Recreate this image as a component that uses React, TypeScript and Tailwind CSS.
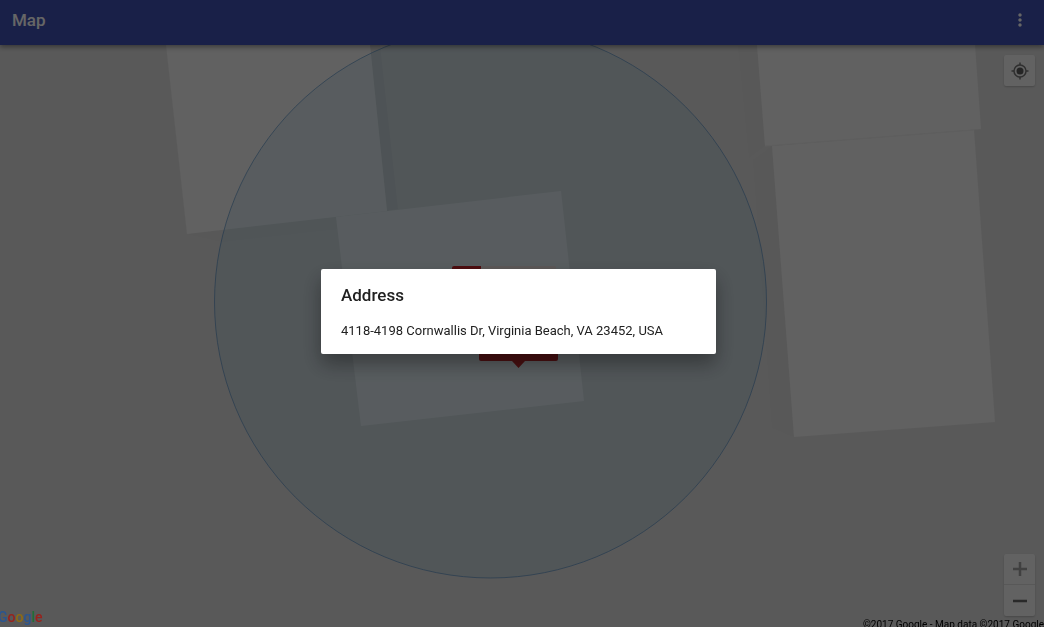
import { MdMoreVert } from "react-icons/md";

const logoLetters = [
  { letter: "G", color: "text-[#2a5590]" },
  { letter: "o", color: "text-[#98221c]" },
  { letter: "o", color: "text-[#8f6c12]" },
  { letter: "g", color: "text-[#2a5590]" },
  { letter: "l", color: "text-[#1f6e36]" },
  { letter: "e", color: "text-[#98221c]" },
];

function MapDrawing() {
  return (
    <svg
      className="absolute inset-0 size-full"
      viewBox="0 45 1044 582"
      preserveAspectRatio="xMidYMid slice"
      aria-hidden="true"
    >
      <rect y="45" width="1044" height="582" fill="#dfdfdf" />
      <path d="M370 45H380L398 209L387 211Z" fill="#d8d8d8" />
      <g fill="#dcdcdc">
        <path d="M187 234L336 217L339 229L222 242Z" />
        <path d="M738 45H757L765 146L749 158Z" />
        <path d="M753 160L772 146L794 437L772 428Z" />
      </g>
      <g fill="#f2f2f2">
        <path d="M166 45H370L387 211L187 234Z" />
        <path d="M336 217L561 191L584 401L361 426Z" />
        <path d="M757 45H975L981 129L765 146Z" />
        <path d="M772 146L974 130L995 422L794 437Z" />
      </g>
      <path d="M765 146L974 130" stroke="#ebebeb" fill="none" />
      <circle
        cx="490.500"
        cy="302"
        r="276"
        fill="#38a0d0"
        fillOpacity="0.12"
        stroke="#4a86c0"
        strokeOpacity="0.6"
      />
      <rect x="481" y="266" width="75" height="50" rx="1" fill="#e6dcda" />
      <path d="M454 266H481V316H452V268Q452 266 454 266Z" fill="#c02329" />
      <path
        d="M479 330H558V359Q558 361 556 361H525L518.500 368L512 361H481Q479 361 479 359Z"
        fill="#b5262b"
      />
    </svg>
  );
}

function LocateIcon() {
  return (
    <svg viewBox="0 0 18 18" className="size-[18px]" fill="none" stroke="#777777" aria-hidden="true">
      <circle cx="9" cy="9" r="6" strokeWidth="1.500" />
      <path d="M9 0.500V3M9 15V17.500M0.500 9H3M15 9H17.500" strokeWidth="1.500" />
      <circle cx="9" cy="9" r="3.500" fill="#5c5c5c" stroke="none" />
    </svg>
  );
}

export default function App() {
  return (
    <div className="flex h-screen flex-col overflow-hidden font-[Roboto,sans-serif]">
      <header className="z-10 flex h-[45px] shrink-0 items-center justify-between bg-[#3f51b5] pr-4 pb-1.5 pl-3 text-white shadow-[0_2px_5px_rgba(0,0,0,0.4)]">
        <h1 className="text-[17px] leading-6 font-medium">Map</h1>
        <button type="button" aria-label="More options" className="-mr-1 flex size-6 items-center justify-center">
          <MdMoreVert className="size-5" />
        </button>
      </header>

      <main className="relative flex flex-1 flex-col items-end justify-between overflow-hidden pt-[10px] pr-[9px] pb-[11px]">
        <MapDrawing />
        <button
          type="button"
          aria-label="My location"
          className="relative flex size-[31px] items-center justify-center rounded-xs bg-[#f4f4f4] shadow-[0_1px_2px_rgba(0,0,0,0.2)]"
        >
          <LocateIcon />
        </button>
        <div className="relative flex w-[31px] flex-col divide-y divide-[#dcdcdc] rounded-xs bg-[#f4f4f4] shadow-[0_1px_2px_rgba(0,0,0,0.2)]">
          <button type="button" aria-label="Zoom in" className="flex h-[31px] items-center justify-center">
            <svg viewBox="0 0 14 14" className="size-[14px]" stroke="#a0a0a0" strokeWidth="2.500" aria-hidden="true">
              <path d="M7 0V14M0 7H14" />
            </svg>
          </button>
          <button type="button" aria-label="Zoom out" className="flex h-[31px] items-center justify-center">
            <svg viewBox="0 0 14 14" className="size-[14px]" stroke="#666666" strokeWidth="2.500" aria-hidden="true">
              <path d="M0 7H14" />
            </svg>
          </button>
        </div>
      </main>

      <div className="fixed inset-0 z-20 flex items-center justify-center bg-black/60 pr-[7px] pb-1">
        <section
          role="dialog"
          aria-modal="true"
          aria-labelledby="address-title"
          className="w-full max-w-[395px] rounded-xs bg-white px-5 pt-[14px] pb-[13px] text-[#212121] shadow-[0_10px_20px_rgba(0,0,0,0.35)]"
        >
          <h2 id="address-title" className="text-[17px] leading-6 font-medium">Address</h2>
          <p className="pt-[14px] text-[13px] leading-5">4118-4198 Cornwallis Dr, Virginia Beach, VA 23452, USA</p>
        </section>
      </div>

      <a
        href="#google"
        aria-label="Google"
        className="absolute bottom-0 -left-[2px] z-30 font-[Roboto,sans-serif] text-[14px] leading-5 font-medium"
      >
        {logoLetters.map((item, index) => (
          <span key={index} className={item.color}>{item.letter}</span>
        ))}
      </a>
      <p className="absolute right-0 -bottom-1 z-30 text-[10px] leading-3 whitespace-nowrap text-black">
        ©2017 Google - Map data ©2017 Google
      </p>
    </div>
  );
}
